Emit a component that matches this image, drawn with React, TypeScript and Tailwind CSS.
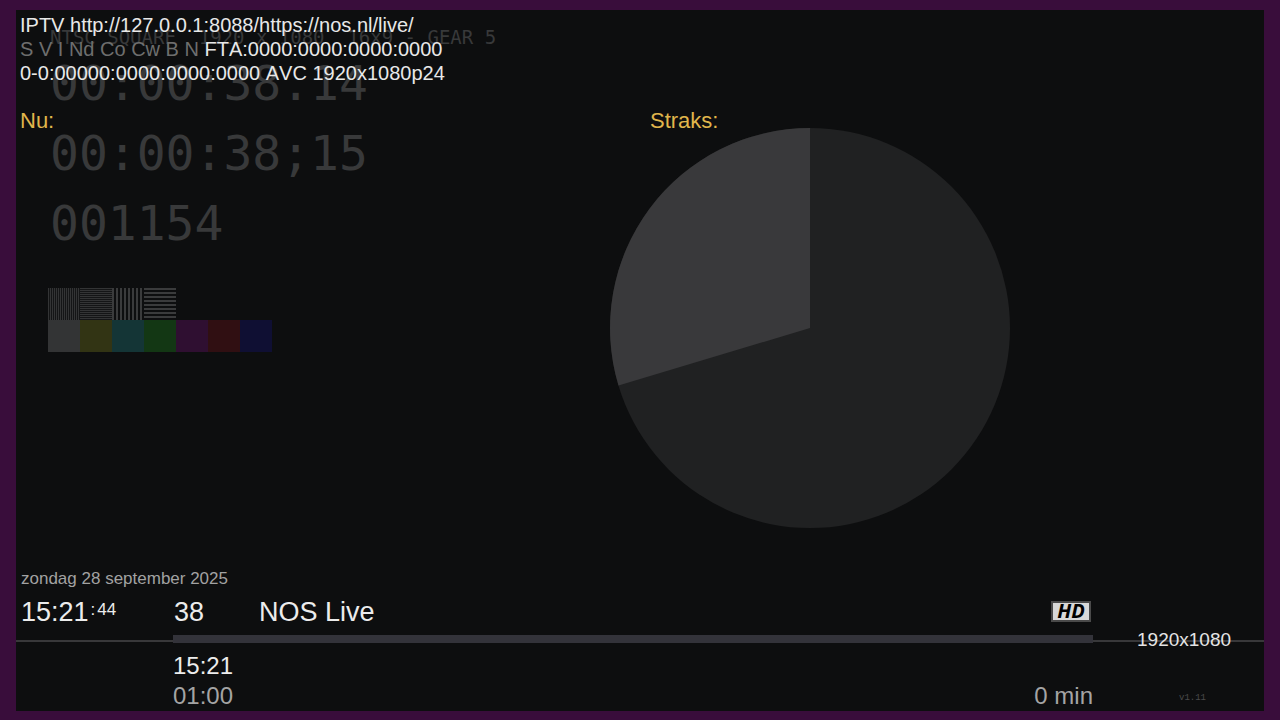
const patterns = [
  "bg-[repeating-linear-gradient(90deg,#333435_0_1px,#141516_1px_2px)]",
  "bg-[repeating-linear-gradient(180deg,#333435_0_1px,#141516_1px_2px)]",
  "bg-[repeating-linear-gradient(90deg,#3a3b3c_0_2px,#0d0e0f_2px_4px)]",
  "bg-[repeating-linear-gradient(180deg,#3a3b3c_0_2px,#0d0e0f_2px_4px)]",
];

const colors = [
  "bg-[#333435]",
  "bg-[#323414]",
  "bg-[#143536]",
  "bg-[#133714]",
  "bg-[#2f0f31]",
  "bg-[#300f12]",
  "bg-[#0f0f33]",
];

function TestCard() {
  return (
    <div className="absolute inset-0 font-['DejaVu_Sans_Mono',monospace] text-[#38393a]">
      <div className="pl-[34px] pt-4">
        <p className="whitespace-pre text-[19px] leading-[22px]">NTSC SQUARE  1920 x 1080  16x9 - GEAR 5</p>
        <div className="text-[48px] leading-[70px]">
          <p>00:00:38.14</p>
          <p>00:00:38;15</p>
          <p>001154</p>
        </div>
      </div>
      <div className="ml-8 mt-[30px]">
        <div className="flex">
          {patterns.map((pattern) => (
            <div key={pattern} className={`size-8 ${pattern}`} />
          ))}
        </div>
        <div className="flex">
          {colors.map((color) => (
            <div key={color} className={`size-8 ${color}`} />
          ))}
        </div>
      </div>
      <svg viewBox="0 0 400 400" className="absolute left-[594px] top-[118px] size-[400px]">
        <circle cx="200" cy="200" r="200" fill="#202122" />
        <path d="M200 200V0A200 200 0 0 0 8.500 257.600Z" fill="#39393b" />
      </svg>
    </div>
  );
}

function StreamInfo() {
  return (
    <div className="pl-1 pt-[3px] text-[20px] leading-6 text-[#e8e8e8] [font-kerning:none]">
      <p>IPTV http://127.0.0.1:8088/https://nos.nl/live/</p>
      <p>
        <span className="text-[#6e6e6e]">S V I Nd Co Cw B N</span> FTA:0000:0000:0000:0000
      </p>
      <p>0-0:00000:0000:0000:0000 AVC 1920x1080p24</p>
    </div>
  );
}

function ChannelBar() {
  return (
    <div className="mt-auto">
      <p className="pl-[5px] text-[17px] leading-5 text-[#a2a2a2]">zondag 28 september 2025</p>
      <div className="flex h-[46px] items-center pl-[5px] text-[27px] leading-8 text-[#ececec]">
        <div className="flex w-[153px] items-start">
          <span>15:21</span>
          <span className="flex gap-[2px] pl-[2px] text-[17px] leading-7">
            <span>:</span>
            <span>44</span>
          </span>
        </div>
        <span className="w-[85px]">38</span>
        <h1>NOS Live</h1>
        <span className="mb-[2px] ml-auto mr-[173px] flex h-[21px] w-10 items-center justify-center border-2 border-[#4a4a4a] bg-[#d8d8d8] font-['Noto_Sans',sans-serif] text-[20px] font-bold italic leading-none text-black">
          HD
        </span>
      </div>
      <div className="flex h-2 items-center">
        <div className="mt-1 h-[2px] w-[157px] bg-[#38383a]" />
        <div className="h-2 flex-1 bg-[#33333a]" />
        <div className="relative mt-1 h-[2px] w-[171px] bg-[#38383a]">
          <span className="absolute -top-3 left-11 text-[19px] leading-6 text-[#e4e4e4]">1920x1080</span>
        </div>
      </div>
      <div className="flex pl-[157px] pt-2 text-[24px] leading-[30px]">
        <div>
          <p className="text-[#ececec]">15:21</p>
          <p className="text-[#a4a4a4]">01:00</p>
        </div>
        <p className="ml-auto self-end text-[#a4a4a4]">0 min</p>
        <p className="w-[171px] self-end pl-[86px] font-['Liberation_Mono',monospace] text-[9px] leading-[26px] text-[#4a4a4a]">v1.11</p>
      </div>
    </div>
  );
}

export default function App() {
  return (
    <main className="h-screen overflow-hidden bg-[#390d3b] px-4 pb-[9px] pt-[10px] font-['Liberation_Sans',Arial,sans-serif]">
      <div className="relative h-full bg-[#0d0e0f]">
        <TestCard />
        <div className="relative flex h-full flex-col">
          <StreamInfo />
          <div className="mt-[23px] grid grid-cols-2 gap-4 pl-1 text-[22px] leading-[26px] text-[#e0b64c]">
            <h2>Nu:</h2>
            <h2>Straks:</h2>
          </div>
          <ChannelBar />
        </div>
      </div>
    </main>
  );
}
